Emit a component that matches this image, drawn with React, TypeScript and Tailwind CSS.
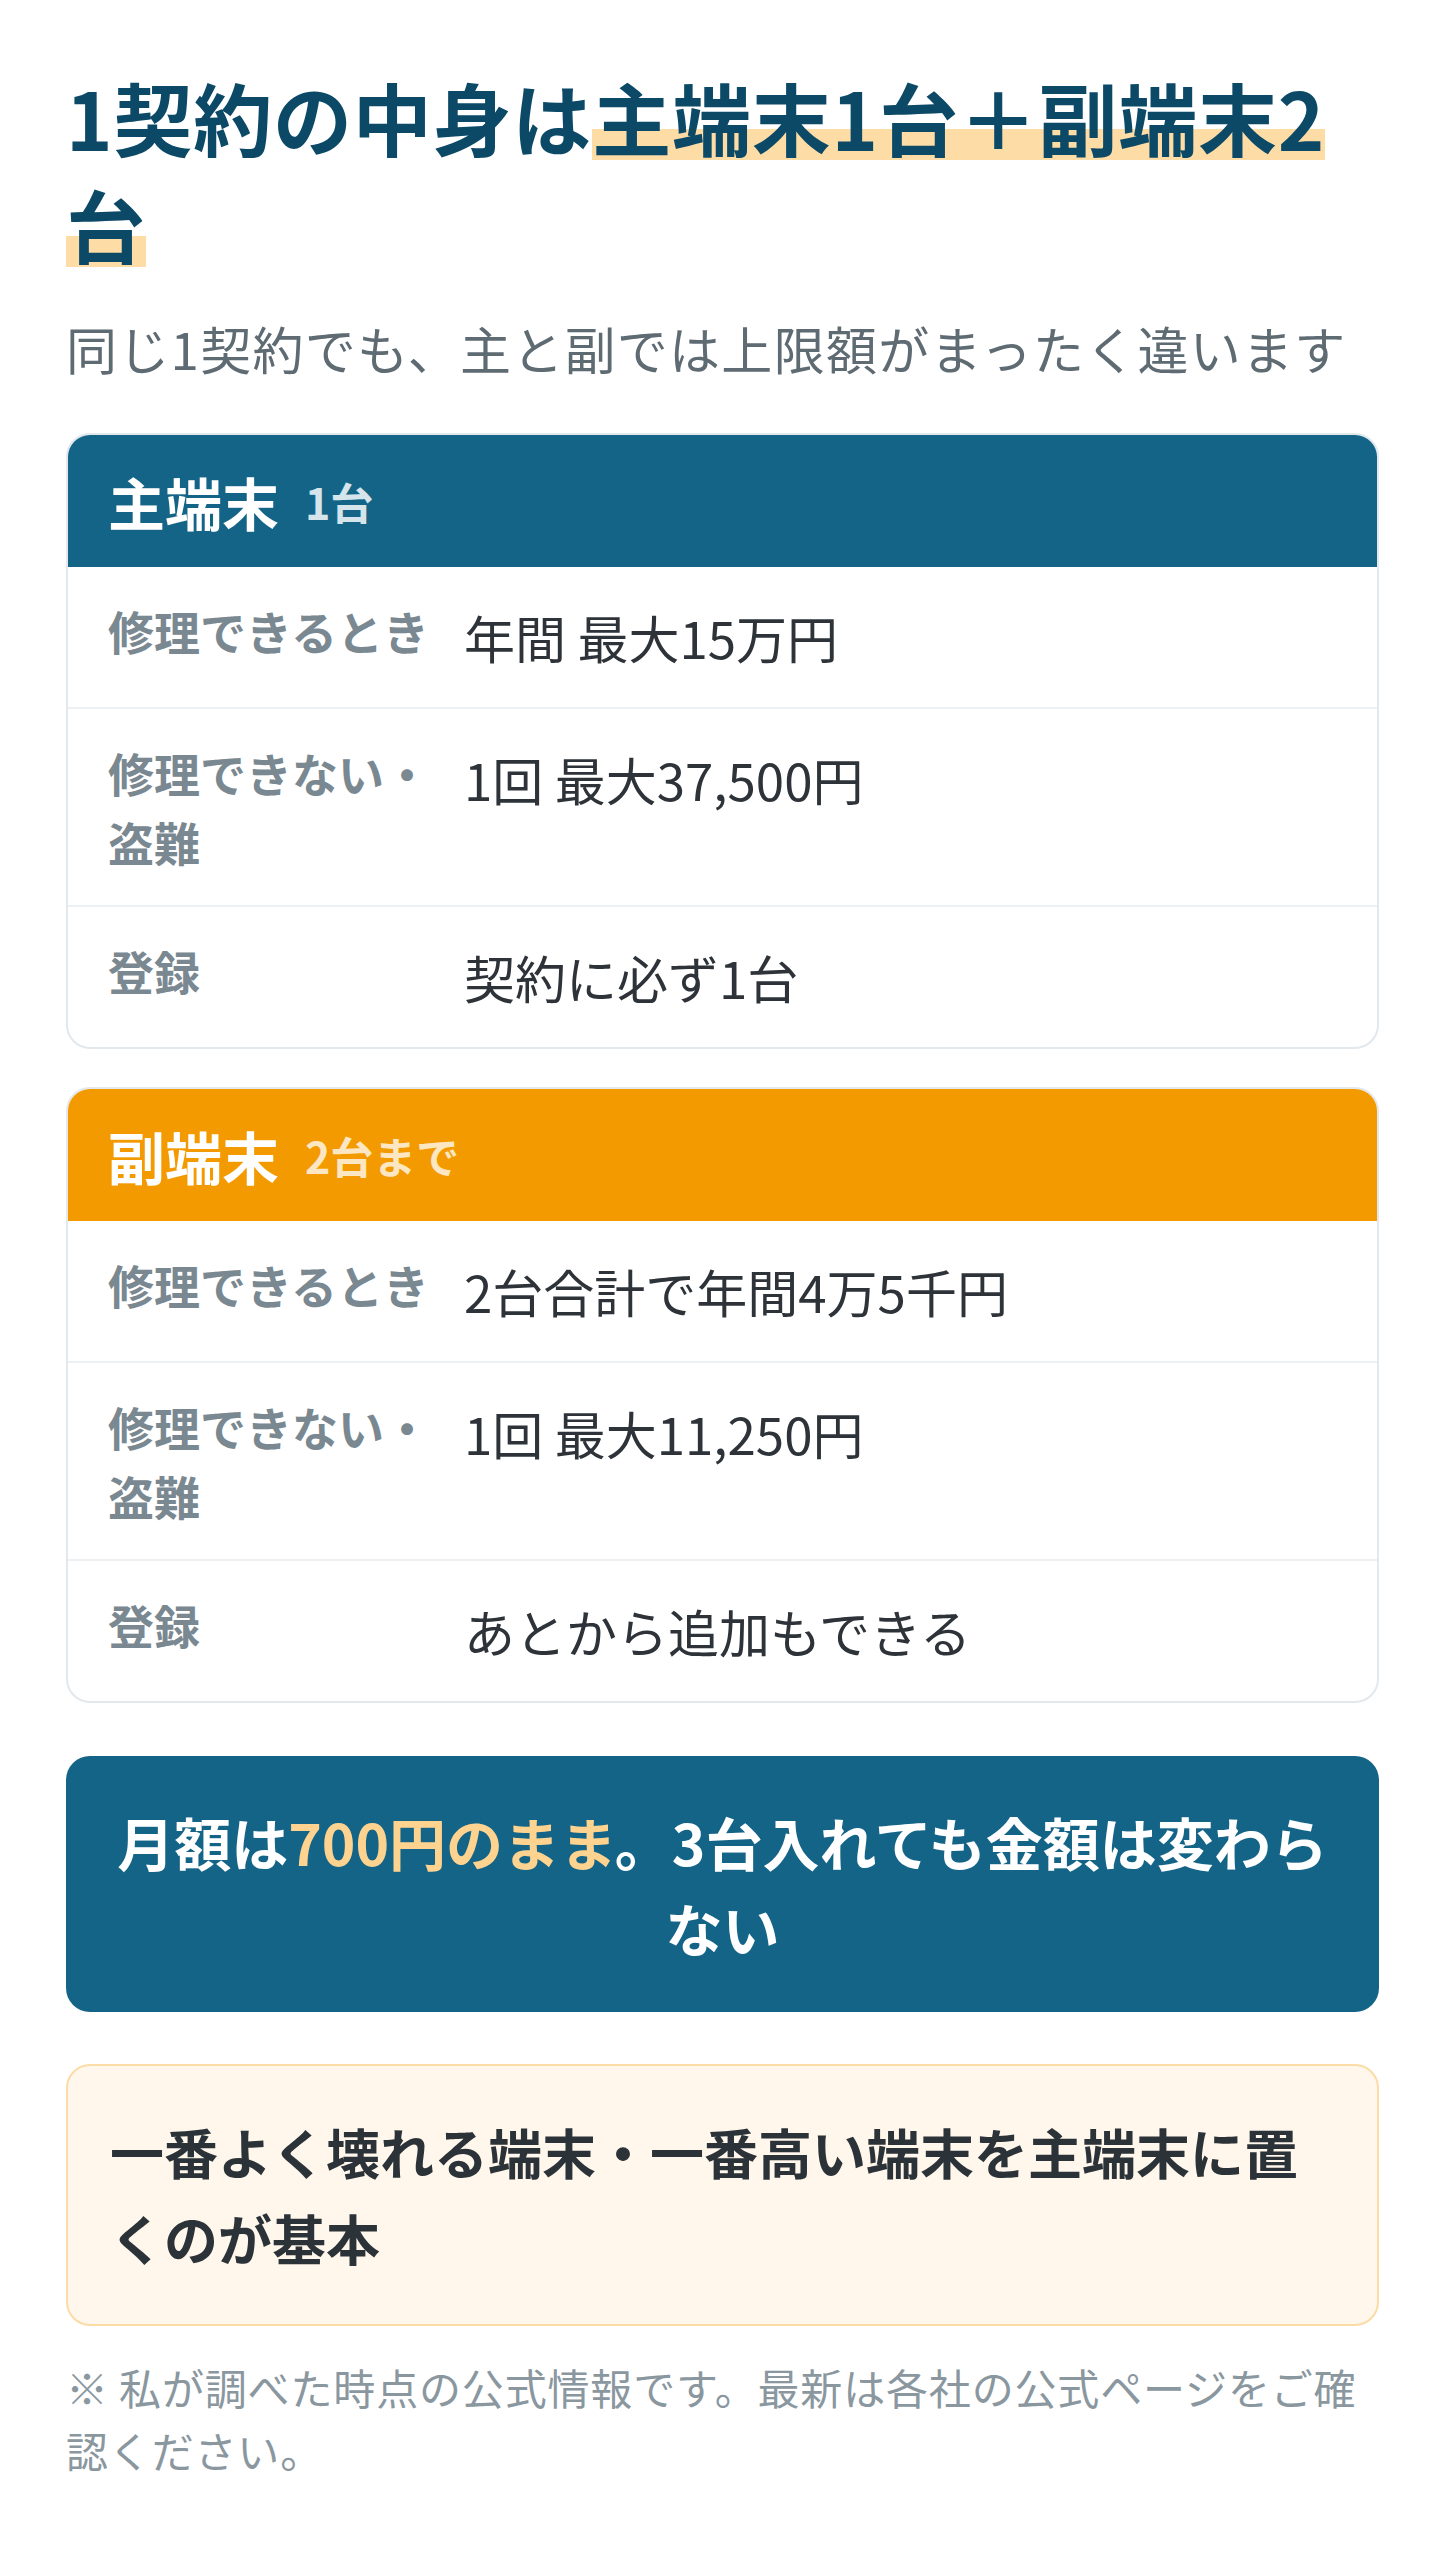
import React from 'react';

const font = { fontFamily: '"Noto Sans CJK JP", "Noto Sans", sans-serif' };

type Row = { label: string; value: string };

function PlanCard({
  title,
  count,
  headerClass,
  countClass,
  rows,
}: {
  title: string;
  count: string;
  headerClass: string;
  countClass: string;
  rows: Row[];
}) {
  return (
    <div className="overflow-hidden rounded-[24px] border-2 border-[#e3e8ed] bg-white">
      <div className={`flex h-[132px] items-center px-[40px] ${headerClass}`}>
        <span className="text-[57px] font-bold leading-none text-white">{title}</span>
        <span className={`ml-[26px] text-[43px] font-bold leading-none ${countClass}`}>{count}</span>
      </div>
      {rows.map((r, i) => (
        <div
          key={i}
          className={`flex items-start px-[40px] py-[29px] ${i > 0 ? 'border-t-2 border-[#eef1f4]' : ''}`}
        >
          <div className="w-[330px] shrink-0 text-[46px] font-bold leading-[69px] text-[#7a8891]">{r.label}</div>
          <div className="ml-[26px] text-[51px] leading-[82px] text-[#2d3338]">{r.value}</div>
        </div>
      ))}
    </div>
  );
}

export default function App() {
  return (
    <div className="min-h-screen bg-white" style={font}>
      <div className="px-[66px] pt-[63px] pb-[80px]">
        {/* 見出し */}
        <h1 className="text-[79px] font-bold leading-[107px] tracking-[0.01em] text-[#0b4967]">
          1契約の中身は
          <span className="bg-[linear-gradient(transparent_61%,#fddca5_61%,#fddca5_88%,transparent_88%)] [box-decoration-break:clone]">
            主端末1台＋副端末2台
          </span>
        </h1>
        <p className="mt-[30px] text-[51px] leading-[82px] tracking-[0.025em] text-[#5f6b73]">
          同じ1契約でも、主と副では上限額がまったく違います
        </p>

        <div className="mt-[44px] flex flex-col gap-[38px]">
          <PlanCard
            title="主端末"
            count="1台"
            headerClass="bg-[#146487]"
            countClass="text-[#d6e4eb]"
            rows={[
              { label: '修理できるとき', value: '年間 最大15万円' },
              { label: '修理できない・盗難', value: '1回 最大37,500円' },
              { label: '登録', value: '契約に必ず1台' },
            ]}
          />
          <PlanCard
            title="副端末"
            count="2台まで"
            headerClass="bg-[#f29a00]"
            countClass="text-[#fde6c2]"
            rows={[
              { label: '修理できるとき', value: '2台合計で年間4万5千円' },
              { label: '修理できない・盗難', value: '1回 最大11,250円' },
              { label: '登録', value: 'あとから追加もできる' },
            ]}
          />
        </div>

        {/* 月額 */}
        <div className="mt-[53px] rounded-[24px] bg-[#146487] px-[42px] py-[42px] text-center text-[57px] font-bold leading-[86px] text-white">
          月額は<span className="text-[#fed38f]">700円のまま</span>。3台入れても金額は変わらない
        </div>

        {/* ポイント */}
        <div className="mt-[52px] rounded-[24px] border-2 border-[#fbdca6] bg-[#fff6ec] px-[42px] py-[43px] text-[54px] font-bold leading-[86px] text-[#2b3338]">
          一番よく壊れる端末・一番高い端末を主端末に置くのが基本
        </div>

        <p className="mt-[29px] text-[42px] leading-[63px] tracking-[0.02em] text-[#8a979f]">
          ※ 私が調べた時点の公式情報です。最新は各社の公式ページをご確認ください。
        </p>
      </div>
    </div>
  );
}
